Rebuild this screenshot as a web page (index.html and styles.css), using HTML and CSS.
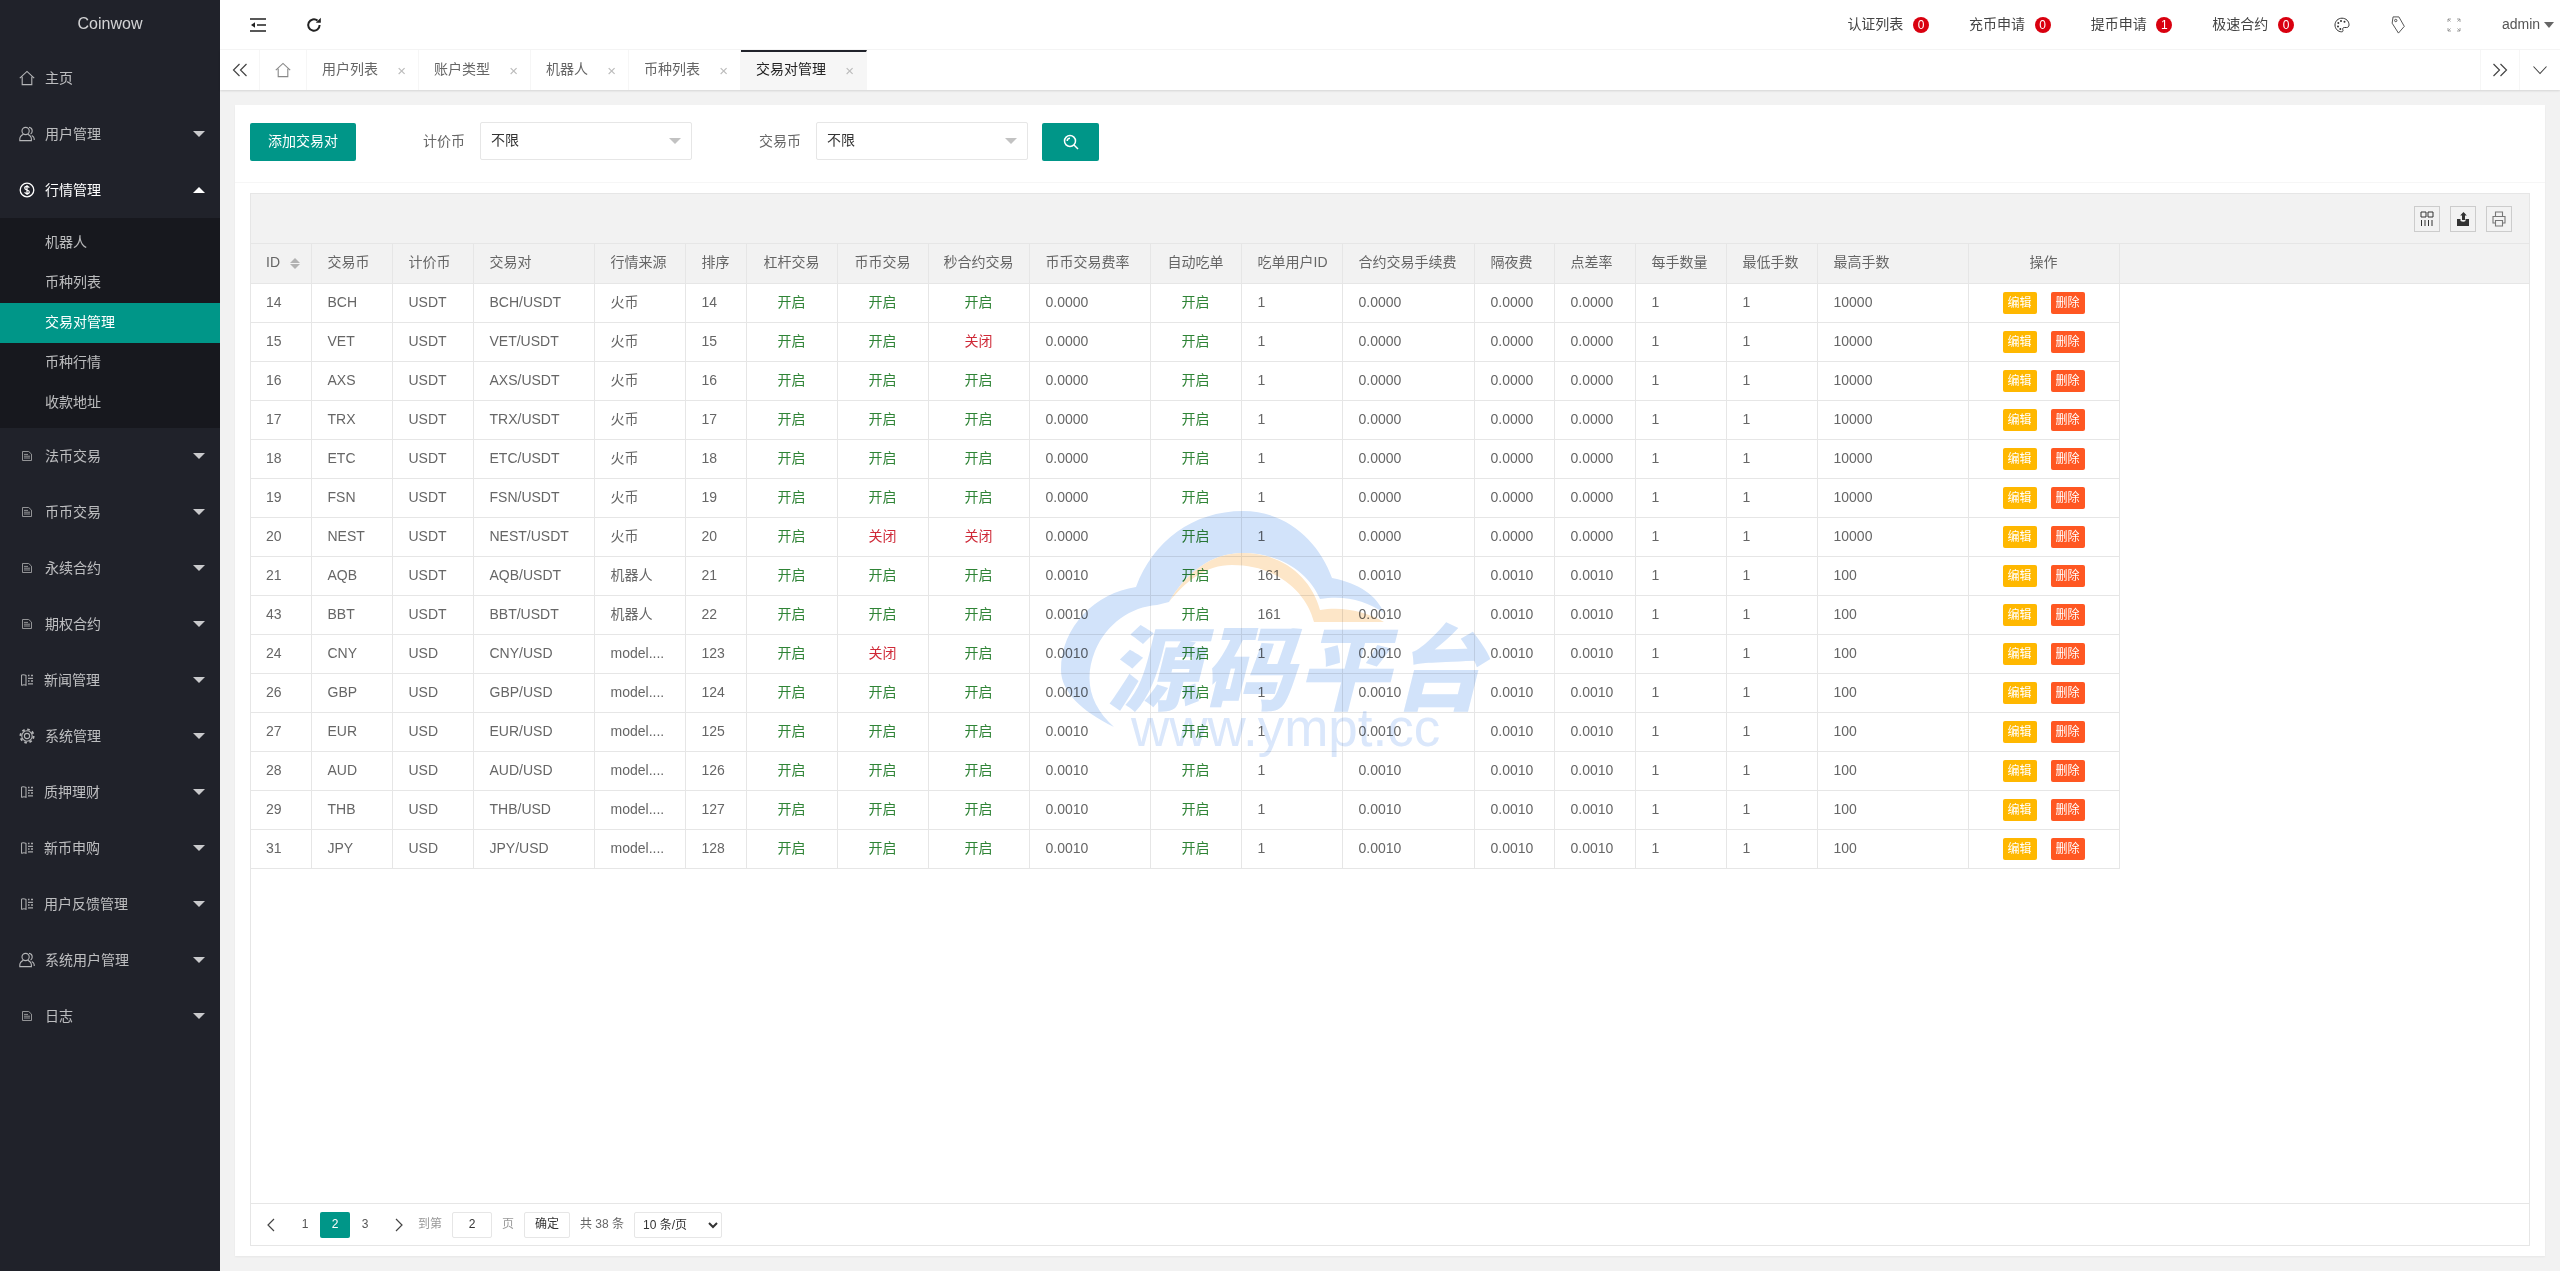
FILE: index.html
```html
<!DOCTYPE html>
<html lang="zh-CN">
<head>
<meta charset="utf-8">
<title>交易对管理</title>
<link rel="stylesheet" href="styles.css">
</head>
<body>
<svg class="defs" aria-hidden="true">
  <symbol id="i-home" viewBox="0 0 16 16"><path d="M.8 8.2 8 1.4l7.2 6.8M3.2 6.8v7.8h9.600V6.800" fill="none" stroke="currentColor" stroke-width="1.1"/></symbol>
  <symbol id="i-user" viewBox="0 0 16 16"><g fill="none" stroke="currentColor" stroke-width="1.1"><circle cx="6.6" cy="5" r="3.6"/><path d="M4.4 8.2C2.4 9.2.8 10.6.8 13v1.6h11.6V13c0-2.4-1.6-3.800-3.600-4.800M10 1.400c1.800.3 3.200 1.800 3.200 3.600 0 1.200-.6 2.400-1.600 3.100M12.800 9.400c1.400.7 2.400 1.800 2.400 3.400v1.200"/></g></symbol>
  <symbol id="i-dollar" viewBox="0 0 16 16"><circle cx="8" cy="8" r="6.800" fill="none" stroke="currentColor" stroke-width="1.300"/><path d="M10.300 5.600C9.800 4.700 9 4.400 8 4.400c-1.300 0-2.300.7-2.300 1.700 0 2.400 4.600 1.300 4.600 3.800 0 1.100-1 1.700-2.300 1.700-1 0-1.900-.4-2.400-1.300M8 3v10" fill="none" stroke="currentColor" stroke-width="1.200"/></symbol>
  <symbol id="i-file" viewBox="0 0 10 10"><path d="M.5.5h6.200l2.800 2.600v6.400H.5z" fill="none" stroke="currentColor" stroke-width=".9"/><path d="M2 3.400h4M2 5.200h6M2 7h6" stroke="currentColor" stroke-width=".9"/></symbol>
  <symbol id="i-news" viewBox="0 0 12 12"><g fill="none" stroke="currentColor"><path d="M.5 1v10.500M.5 1c1.800-.5 3.400-.3 4.500.5v9.800c-1.100-.6-2.700-.8-4.500 .2" stroke-width="1.100"/><path d="M7 1.500h1.500M10 1.500h2M7 4.300h5M7 7h1.500M10 7h2M7 9.800h5" stroke-width="1.300"/></g></symbol>
  <symbol id="i-gear" viewBox="0 0 16 16"><g fill="none" stroke="currentColor"><circle cx="8" cy="8" r="5.200" stroke-width="1.100"/><circle cx="8" cy="8" r="2.600" stroke-width="1.100"/><circle cx="8" cy="8" r="6.600" stroke-width="1.900" stroke-dasharray="2.600 2.584"/></g></symbol>
  <symbol id="i-search" viewBox="0 0 16 16"><g fill="none" stroke="currentColor" stroke-width="1.500"><circle cx="7" cy="7" r="5.500"/><path d="m11 11 4 4M4.200 7A2.800 2.800 0 0 1 7 4.200"/></g></symbol>
</svg>

<aside class="side">
  <div class="logo">Coinwow</div>
  <nav class="menu">
    <a class="mi"><svg class="ic"><use href="#i-home"/></svg><span>主页</span></a>
    <a class="mi"><svg class="ic"><use href="#i-user"/></svg><span>用户管理</span><i class="tri"></i></a>
    <a class="mi open"><svg class="ic"><use href="#i-dollar"/></svg><span>行情管理</span><i class="tri up"></i></a>
    <div class="sub">
      <a class="si">机器人</a>
      <a class="si">币种列表</a>
      <a class="si cur">交易对管理</a>
      <a class="si">币种行情</a>
      <a class="si">收款地址</a>
    </div>
    <a class="mi"><svg class="ic sm"><use href="#i-file"/></svg><span>法币交易</span><i class="tri"></i></a>
    <a class="mi"><svg class="ic sm"><use href="#i-file"/></svg><span>币币交易</span><i class="tri"></i></a>
    <a class="mi"><svg class="ic sm"><use href="#i-file"/></svg><span>永续合约</span><i class="tri"></i></a>
    <a class="mi"><svg class="ic sm"><use href="#i-file"/></svg><span>期权合约</span><i class="tri"></i></a>
    <a class="mi"><svg class="ic md"><use href="#i-news"/></svg><span>新闻管理</span><i class="tri"></i></a>
    <a class="mi"><svg class="ic"><use href="#i-gear"/></svg><span>系统管理</span><i class="tri"></i></a>
    <a class="mi"><svg class="ic md"><use href="#i-news"/></svg><span>质押理财</span><i class="tri"></i></a>
    <a class="mi"><svg class="ic md"><use href="#i-news"/></svg><span>新币申购</span><i class="tri"></i></a>
    <a class="mi"><svg class="ic md"><use href="#i-news"/></svg><span>用户反馈管理</span><i class="tri"></i></a>
    <a class="mi"><svg class="ic"><use href="#i-user"/></svg><span>系统用户管理</span><i class="tri"></i></a>
    <a class="mi"><svg class="ic sm"><use href="#i-file"/></svg><span>日志</span><i class="tri"></i></a>
  </nav>
</aside>

<div class="main">
  <header class="top">
    <div class="top-l">
      <svg class="tool-ic" viewBox="0 0 16 14"><path d="M0 1h16M7 7h9M0 13h16" stroke="#222" stroke-width="1.500" fill="none"/><path d="M5 4.200v5.600L1 7z" fill="#222"/></svg>
      <svg class="tool-ic ref" viewBox="0 0 16 16"><path d="M13.600 8A5.700 5.700 0 1 1 11.500 3.600" stroke="#222" stroke-width="2" fill="none"/><path d="M9.800 5.800h5V.8z" fill="#222"/></svg>
    </div>
    <div class="top-r">
      <a class="tn">认证列表<b class="badge">0</b></a>
      <a class="tn">充币申请<b class="badge">0</b></a>
      <a class="tn">提币申请<b class="badge">1</b></a>
      <a class="tn">极速合约<b class="badge">0</b></a>
      <a class="tn ico"><svg class="ic16" viewBox="0 0 16 16"><g fill="none" stroke="#333"><path d="M8 1.200C4 1.200 1 4.200 1 8s3 6.800 6.600 6.800c1.400 0 1.700-1 1.200-2-.5-1.200.2-2.300 1.600-2.300h2.200c1.600 0 2.400-1.100 2.400-2.700 0-3.700-3-6.600-7-6.600z"/></g><g fill="#333"><circle cx="4.300" cy="6" r="1"/><circle cx="7" cy="3.900" r="1"/><circle cx="10.500" cy="4.700" r="1"/><circle cx="4" cy="9.500" r="1"/><circle cx="6.300" cy="12" r="1"/></g></svg></a>
      <a class="tn ico"><svg class="ic16 tag" viewBox="0 0 16 20"><path d="M2.500 1h6.500l6 10.500-6.500 7.500L1.500 8z" fill="none" stroke="#444"/><circle cx="5.500" cy="5" r="1.300" fill="none" stroke="#444"/></svg></a>
      <a class="tn ico"><svg class="ic16" viewBox="0 0 16 16"><path d="M2 5V2h3M2 2l2.500 2.500M14 5V2h-3M14 2l-2.500 2.500M2 11v3h3M2 14l2.500-2.500M14 11v3h-3M14 14l-2.500-2.500" fill="none" stroke="#8a8a8a" stroke-width=".8"/></svg></a>
      <a class="admin">admin<i class="tri dark"></i></a>
    </div>
  </header>

  <div class="tabs">
    <a class="tb-btn"><svg class="chev" viewBox="0 0 16 14"><path d="M7.500 1 1.500 7l6 6M14.500 1l-6 6 6 6" fill="none" stroke="#444" stroke-width="1.200"/></svg></a>
    <a class="tb-home"><svg class="home-ic"><use href="#i-home"/></svg></a>
    <a class="tab">用户列表<em>×</em></a>
    <a class="tab">账户类型<em>×</em></a>
    <a class="tab">机器人<em>×</em></a>
    <a class="tab">币种列表<em>×</em></a>
    <a class="tab on-tab">交易对管理<em>×</em></a>
    <a class="tb-btn tb-next"><svg class="chev" viewBox="0 0 16 14"><path d="m1.500 1 6 6-6 6M8.500 1l6 6-6 6" fill="none" stroke="#444" stroke-width="1.200"/></svg></a>
    <a class="tb-btn last"><svg class="chev" viewBox="0 0 16 14"><path d="m1.500 3.500 6.500 7 6.500-7" fill="none" stroke="#444" stroke-width="1.100"/></svg></a>
  </div>

  <main class="content">
    <section class="card">
      <div class="filter">
        <button class="btn-add">添加交易对</button>
        <label class="flabel">计价币</label>
        <div class="sel">不限<i class="tri grey"></i></div>
        <label class="flabel">交易币</label>
        <div class="sel">不限<i class="tri grey"></i></div>
        <button class="btn-search"><svg class="s-ic"><use href="#i-search"/></svg></button>
      </div>
      <div class="tbox-wrap">
        <div class="tbox">
          <div class="tools">
            <a class="tool"><svg viewBox="0 0 14 16" class="t-svg"><path d="M1 1h5v5H1zM8 1h5v5H8zM1.500 9v6M5 9v6M8.500 9v6M12 9v6" fill="none" stroke="#333"/></svg></a>
            <a class="tool"><svg viewBox="0 0 14 16" class="t-svg"><path d="M1 8h3.500v2c2 1 4 1 5 0V8H13v7H1z" fill="#333"/><path d="M6 9V4.500H4.200L7.500 1l3.300 3.500H9V9z" fill="#333"/></svg></a>
            <a class="tool"><svg viewBox="0 0 14 16" class="t-svg"><path d="M3.500 5V1h7v4M3 12H1V5.500h12V12h-2M3.500 9.500h7V15h-7z" fill="none" stroke="#777" stroke-width="1.100"/></svg></a>
          </div>
          <div class="tmain">
            <table class="grid">
              <colgroup>
                <col class="w60"><col class="w81"><col class="w81"><col class="w121"><col class="w91"><col class="w61"><col class="w91"><col class="w91"><col class="w101"><col class="w121"><col class="w91"><col class="w101"><col class="w132"><col class="w80"><col class="w81"><col class="w91"><col class="w91"><col class="w151"><col class="w151"><col>
              </colgroup>
              <thead>
                <tr><th class="id-th">ID<i class="sort"></i></th><th>交易币</th><th>计价币</th><th>交易对</th><th>行情来源</th><th>排序</th><th class="c">杠杆交易</th><th class="c">币币交易</th><th class="c">秒合约交易</th><th>币币交易费率</th><th class="c">自动吃单</th><th>吃单用户ID</th><th>合约交易手续费</th><th>隔夜费</th><th>点差率</th><th>每手数量</th><th>最低手数</th><th>最高手数</th><th class="c">操作</th><th class="fill"></th></tr>
              </thead>
              <tbody>
                <tr><td>14</td><td>BCH</td><td>USDT</td><td>BCH/USDT</td><td>火币</td><td>14</td><td class="c on">开启</td><td class="c on">开启</td><td class="c on">开启</td><td>0.0000</td><td class="c on">开启</td><td>1</td><td>0.0000</td><td>0.0000</td><td>0.0000</td><td>1</td><td>1</td><td>10000</td><td class="c"><a class="b-edit">编辑</a><a class="b-del">删除</a></td><td class="fill"></td></tr>
                <tr><td>15</td><td>VET</td><td>USDT</td><td>VET/USDT</td><td>火币</td><td>15</td><td class="c on">开启</td><td class="c on">开启</td><td class="c off">关闭</td><td>0.0000</td><td class="c on">开启</td><td>1</td><td>0.0000</td><td>0.0000</td><td>0.0000</td><td>1</td><td>1</td><td>10000</td><td class="c"><a class="b-edit">编辑</a><a class="b-del">删除</a></td><td class="fill"></td></tr>
                <tr><td>16</td><td>AXS</td><td>USDT</td><td>AXS/USDT</td><td>火币</td><td>16</td><td class="c on">开启</td><td class="c on">开启</td><td class="c on">开启</td><td>0.0000</td><td class="c on">开启</td><td>1</td><td>0.0000</td><td>0.0000</td><td>0.0000</td><td>1</td><td>1</td><td>10000</td><td class="c"><a class="b-edit">编辑</a><a class="b-del">删除</a></td><td class="fill"></td></tr>
                <tr><td>17</td><td>TRX</td><td>USDT</td><td>TRX/USDT</td><td>火币</td><td>17</td><td class="c on">开启</td><td class="c on">开启</td><td class="c on">开启</td><td>0.0000</td><td class="c on">开启</td><td>1</td><td>0.0000</td><td>0.0000</td><td>0.0000</td><td>1</td><td>1</td><td>10000</td><td class="c"><a class="b-edit">编辑</a><a class="b-del">删除</a></td><td class="fill"></td></tr>
                <tr><td>18</td><td>ETC</td><td>USDT</td><td>ETC/USDT</td><td>火币</td><td>18</td><td class="c on">开启</td><td class="c on">开启</td><td class="c on">开启</td><td>0.0000</td><td class="c on">开启</td><td>1</td><td>0.0000</td><td>0.0000</td><td>0.0000</td><td>1</td><td>1</td><td>10000</td><td class="c"><a class="b-edit">编辑</a><a class="b-del">删除</a></td><td class="fill"></td></tr>
                <tr><td>19</td><td>FSN</td><td>USDT</td><td>FSN/USDT</td><td>火币</td><td>19</td><td class="c on">开启</td><td class="c on">开启</td><td class="c on">开启</td><td>0.0000</td><td class="c on">开启</td><td>1</td><td>0.0000</td><td>0.0000</td><td>0.0000</td><td>1</td><td>1</td><td>10000</td><td class="c"><a class="b-edit">编辑</a><a class="b-del">删除</a></td><td class="fill"></td></tr>
                <tr><td>20</td><td>NEST</td><td>USDT</td><td>NEST/USDT</td><td>火币</td><td>20</td><td class="c on">开启</td><td class="c off">关闭</td><td class="c off">关闭</td><td>0.0000</td><td class="c on">开启</td><td>1</td><td>0.0000</td><td>0.0000</td><td>0.0000</td><td>1</td><td>1</td><td>10000</td><td class="c"><a class="b-edit">编辑</a><a class="b-del">删除</a></td><td class="fill"></td></tr>
                <tr><td>21</td><td>AQB</td><td>USDT</td><td>AQB/USDT</td><td>机器人</td><td>21</td><td class="c on">开启</td><td class="c on">开启</td><td class="c on">开启</td><td>0.0010</td><td class="c on">开启</td><td>161</td><td>0.0010</td><td>0.0010</td><td>0.0010</td><td>1</td><td>1</td><td>100</td><td class="c"><a class="b-edit">编辑</a><a class="b-del">删除</a></td><td class="fill"></td></tr>
                <tr><td>43</td><td>BBT</td><td>USDT</td><td>BBT/USDT</td><td>机器人</td><td>22</td><td class="c on">开启</td><td class="c on">开启</td><td class="c on">开启</td><td>0.0010</td><td class="c on">开启</td><td>161</td><td>0.0010</td><td>0.0010</td><td>0.0010</td><td>1</td><td>1</td><td>100</td><td class="c"><a class="b-edit">编辑</a><a class="b-del">删除</a></td><td class="fill"></td></tr>
                <tr><td>24</td><td>CNY</td><td>USD</td><td>CNY/USD</td><td>model....</td><td>123</td><td class="c on">开启</td><td class="c off">关闭</td><td class="c on">开启</td><td>0.0010</td><td class="c on">开启</td><td>1</td><td>0.0010</td><td>0.0010</td><td>0.0010</td><td>1</td><td>1</td><td>100</td><td class="c"><a class="b-edit">编辑</a><a class="b-del">删除</a></td><td class="fill"></td></tr>
                <tr><td>26</td><td>GBP</td><td>USD</td><td>GBP/USD</td><td>model....</td><td>124</td><td class="c on">开启</td><td class="c on">开启</td><td class="c on">开启</td><td>0.0010</td><td class="c on">开启</td><td>1</td><td>0.0010</td><td>0.0010</td><td>0.0010</td><td>1</td><td>1</td><td>100</td><td class="c"><a class="b-edit">编辑</a><a class="b-del">删除</a></td><td class="fill"></td></tr>
                <tr><td>27</td><td>EUR</td><td>USD</td><td>EUR/USD</td><td>model....</td><td>125</td><td class="c on">开启</td><td class="c on">开启</td><td class="c on">开启</td><td>0.0010</td><td class="c on">开启</td><td>1</td><td>0.0010</td><td>0.0010</td><td>0.0010</td><td>1</td><td>1</td><td>100</td><td class="c"><a class="b-edit">编辑</a><a class="b-del">删除</a></td><td class="fill"></td></tr>
                <tr><td>28</td><td>AUD</td><td>USD</td><td>AUD/USD</td><td>model....</td><td>126</td><td class="c on">开启</td><td class="c on">开启</td><td class="c on">开启</td><td>0.0010</td><td class="c on">开启</td><td>1</td><td>0.0010</td><td>0.0010</td><td>0.0010</td><td>1</td><td>1</td><td>100</td><td class="c"><a class="b-edit">编辑</a><a class="b-del">删除</a></td><td class="fill"></td></tr>
                <tr><td>29</td><td>THB</td><td>USD</td><td>THB/USD</td><td>model....</td><td>127</td><td class="c on">开启</td><td class="c on">开启</td><td class="c on">开启</td><td>0.0010</td><td class="c on">开启</td><td>1</td><td>0.0010</td><td>0.0010</td><td>0.0010</td><td>1</td><td>1</td><td>100</td><td class="c"><a class="b-edit">编辑</a><a class="b-del">删除</a></td><td class="fill"></td></tr>
                <tr><td>31</td><td>JPY</td><td>USD</td><td>JPY/USD</td><td>model....</td><td>128</td><td class="c on">开启</td><td class="c on">开启</td><td class="c on">开启</td><td>0.0010</td><td class="c on">开启</td><td>1</td><td>0.0010</td><td>0.0010</td><td>0.0010</td><td>1</td><td>1</td><td>100</td><td class="c"><a class="b-edit">编辑</a><a class="b-del">删除</a></td><td class="fill"></td></tr>
              </tbody>
            </table>
          </div>
          <div class="pager">
            <a class="pg arrow prev"><svg class="pg-ic" viewBox="0 0 8 14"><path d="M7 1 1 7l6 6" fill="none" stroke="#444" stroke-width="1.200"/></svg></a>
            <a class="pg">1</a>
            <a class="pg cur-pg">2</a>
            <a class="pg">3</a>
            <a class="pg arrow next"><svg class="pg-ic" viewBox="0 0 8 14"><path d="m1 1 6 6-6 6" fill="none" stroke="#444" stroke-width="1.200"/></svg></a>
            <span class="skip">到第</span>
            <span class="pg-in">2</span>
            <span class="skip page-w">页</span>
            <a class="pg-ok">确定</a>
            <span class="count">共 38 条</span>
            <select class="limit"><option>10 条/页</option></select>
          </div>
        </div>
      </div>
    </section>
  </main>
</div>

<div class="wm" aria-hidden="true">
  <svg class="wm-cloud" viewBox="0 0 430 245">
    <path d="M53 216C20 200 0 180 0 159C0 115 35 82 75 76C92 30 132 0 182 0C225 0 258 30 271 67C298 72 316 85 323 102C305 90 285 84 259 88C248 62 220 42 182 42C150 42 125 62 108 91L96 94C70 96 46 112 34 140C22 170 30 195 53 216Z" fill="#d2e3fa"/>
    <path d="M108 91C125 62 150 42 182 42C220 42 250 65 259 99C280 95 305 100 323 111L253 111C245 80 215 54 171 54C145 54 125 70 108 91Z" fill="#fde6c8"/>
  </svg>
  <span class="wm-cn">源码平台</span>
  <span class="wm-en">www.ympt.cc</span>
</div>
</body>
</html>
```

FILE: styles.css
```css
* { box-sizing: border-box; }
html, body { height: 100%; }
body {
  margin: 0;
  display: flex;
  height: 1271px;
  overflow: hidden;
  font: 14px/1.4 "Liberation Sans", "Noto Sans CJK SC", sans-serif;
  color: #333;
  background: #f2f2f2;
}
a { color: inherit; text-decoration: none; }
i, em { font-style: normal; }
.defs { display: none; }

/* sidebar */
.side { width: 220px; flex: none; background: #20222a; color: rgba(255,255,255,.7); }
.logo { height: 50px; line-height: 48px; text-align: center; font-size: 16px; color: rgba(255,255,255,.8); }
.mi { display: flex; align-items: center; height: 56px; padding-left: 19px; }
.mi span { margin-top: 2px; }
.mi.open { color: #fff; }
.ic { width: 16px; height: 16px; margin-right: 10px; flex: none; color: #b5b6b8; }
.open .ic { color: #fff; }
.ic.sm { width: 10px; height: 10px; margin: 0 13px 0 3px; color: #a0a1a3; }
.ic.md { width: 12px; height: 12px; margin: 0 11px 0 2px; color: #a8a9ab; }
.tri { width: 0; height: 0; border: 6px solid transparent; border-top-color: #c9cacc; border-bottom-width: 0; margin-left: auto; margin-right: 15px; }
.tri.up { border-top-width: 0; border-bottom: 6px solid #fff; }
.tri.dark { border-width: 6px 5px 0; border-top-color: #666; margin: 0 0 0 4px; }
.tri.grey { border-top-color: #c2c2c2; margin-right: 10px; }
.sub { background: #17181e; padding: 5px 0; }
.si { display: flex; align-items: center; height: 40px; padding-left: 45px; }
.si.cur { background: #009688; color: #fff; }

/* main */
.main { flex: 1; min-width: 0; display: flex; flex-direction: column; }
.top { height: 50px; flex: none; display: flex; align-items: center; justify-content: space-between; background: #fff; border-bottom: 1px solid #f6f6f6; }
.top-l { display: flex; align-items: center; padding-left: 30px; }
.tool-ic { width: 16px; height: 14px; display: block; }
.tool-ic.ref { width: 16px; height: 16px; margin-left: 40px; }
.top-r { display: flex; align-items: center; }
.tn { display: flex; align-items: center; padding: 0 20px; color: #444; }
.badge { width: 16px; height: 16px; margin-left: 9.67px; border-radius: 50%; background: #d9000f; color: #fff; font-weight: 400; font-size: 12px; line-height: 16px; text-align: center; }
.ico { padding: 0 20px; }
.ic16 { width: 16px; height: 16px; display: block; }
.ic16.tag { height: 18px; }
.admin { display: flex; align-items: center; padding-left: 20px; width: 78px; color: #555; }

/* tabs */
.tabs { height: 40px; flex: none; display: flex; background: #fff; box-shadow: 0 1px 2px rgba(0,0,0,.12); position: relative; }
.tb-btn { width: 40px; display: flex; align-items: center; justify-content: center; border-right: 1px solid #f6f6f6; }
.tb-next { margin-left: auto; border-left: 1px solid #f6f6f6; }
.tb-btn.last { border-right: 0; }
.chev { width: 16px; height: 14px; }
.tb-home { width: 47px; display: flex; align-items: center; justify-content: center; border-right: 1px solid #f6f6f6; color: #888; }
.home-ic { width: 16px; height: 16px; }
.tab { display: flex; align-items: center; padding-left: 15px; border-right: 1px solid #f6f6f6; color: #666; }
.tab em { width: 40px; text-align: right; padding-right: 12px; color: #bbb; font-size: 15px; flex: none; }
.on-tab { background: #f6f6f6; color: #222; border-top: 2px solid #20222a; padding-bottom: 2px; }

/* card */
.content { flex: 1; min-height: 0; padding: 15px; display: flex; }
.card { flex: 1; min-width: 0; display: flex; flex-direction: column; background: #fff; box-shadow: 0 1px 2px rgba(0,0,0,.05); }
.filter { height: 78px; flex: none; display: flex; align-items: flex-start; padding: 17px 15px 0; border-bottom: 1px solid #f6f6f6; }
.btn-add { width: 106px; height: 38px; margin-top: 1px; border: 0; border-radius: 2px; background: #009688; color: #fff; font: inherit; padding: 0; }
.flabel { width: 42px; margin: 0 15px 0 67px; line-height: 38px; color: #666; white-space: nowrap; flex: none; }
.sel { width: 212px; height: 38px; flex: none; display: flex; align-items: center; padding-left: 10px; border: 1px solid #e6e6e6; border-radius: 2px; color: #333; background: #fff; }
.btn-search { width: 57px; height: 38px; margin-top: 1px; margin-left: 14px; border: 0; border-radius: 2px; background: #009688; color: #fff; display: flex; align-items: center; justify-content: center; padding: 0; }
.s-ic { width: 16px; height: 16px; }
.tbox-wrap { flex: 1; min-height: 0; display: flex; padding: 10px 15px; }
.tbox { flex: 1; min-width: 0; display: flex; flex-direction: column; border: 1px solid #e6e6e6; }
.tools { height: 50px; flex: none; display: flex; align-items: center; justify-content: flex-end; gap: 10px; padding-right: 17px; background: #f2f2f2; border-bottom: 1px solid #e6e6e6; }
.tool { width: 26px; height: 26px; display: flex; align-items: center; justify-content: center; border: 1px solid #ccc; }
.t-svg { width: 14px; height: 16px; }
.tmain { flex: 1; min-height: 0; }

/* table */
.grid { width: 100%; table-layout: fixed; border-collapse: collapse; color: #666; }
.grid th, .grid td { height: 39px; padding: 0 0 0 16px; text-align: left; font-weight: 400; white-space: nowrap; overflow: hidden; border: 1px solid #e6e6e6; border-top: 0; }
.grid th:first-child, .grid td:first-child { border-left: 0; padding-left: 15px; }
.grid th { background: #f2f2f2; }
.grid .id-th { overflow: visible; }
.grid .c { text-align: center; padding: 0; }
.grid .on { color: #2f8436; }
.grid .off { color: #cf2a38; }
.grid th.fill { border-right: 0; }
.grid td.fill { border: 0; }
.w60 { width: 60px; } .w61 { width: 61px; } .w80 { width: 80px; } .w81 { width: 81px; } .w91 { width: 91px; } .w101 { width: 101px; } .w121 { width: 121px; } .w132 { width: 132px; } .w151 { width: 151px; }
.sort { display: inline-block; position: relative; top: -3px; vertical-align: middle; width: 10px; height: 5px; margin-left: 10px; border-left: 5px solid transparent; border-right: 5px solid transparent; border-bottom: 5px solid #b2b2b2; }
.sort::after { content: ""; position: absolute; left: -5px; top: 6px; border-left: 5px solid transparent; border-right: 5px solid transparent; border-top: 5px solid #b2b2b2; }
.b-edit, .b-del { display: inline-block; width: 34px; height: 22px; line-height: 22px; border-radius: 2px; color: #fff; font-size: 12px; text-align: center; vertical-align: middle; }
.b-edit { background: #ffb800; }
.b-del { background: #ff5722; margin-left: 14px; }

/* pager */
.pager { height: 42px; flex: none; display: flex; align-items: center; padding-left: 5px; border-top: 1px solid #e6e6e6; font-size: 12px; color: #666; }
.pg { width: 30px; height: 26px; display: flex; align-items: center; justify-content: center; color: #555; }
.prev { margin-right: 4px; }
.next { margin-left: 4px; }
.pg-ic { width: 8px; height: 14px; }
.cur-pg { background: #009688; color: #fff; border-radius: 2px; }
.skip { color: #999; margin-left: 4px; }
.pg-in { width: 40px; height: 26px; display: flex; align-items: center; justify-content: center; margin-left: 10px; border: 1px solid #e6e6e6; border-radius: 2px; color: #333; }
.page-w { margin-left: 10px; }
.pg-ok { width: 46px; height: 26px; display: flex; align-items: center; justify-content: center; margin-left: 10px; border: 1px solid #e6e6e6; border-radius: 2px; color: #333; }
.count { margin-left: 10px; color: #666; white-space: nowrap; }
.limit { width: 88px; height: 26px; margin-left: 10px; border: 1px solid #e6e6e6; border-radius: 2px; background: #fff; color: #333; font: 12px "Liberation Sans", "Noto Sans CJK SC", sans-serif; padding-left: 4px; }

/* watermark */
.wm { position: absolute; left: 1061px; top: 511px; width: 430px; height: 245px; pointer-events: none; mix-blend-mode: multiply; }
.wm-cloud { position: absolute; inset: 0; width: 430px; height: 245px; }
.wm-cn { position: absolute; left: 46px; top: 106px; font: italic 900 92px/1 "Noto Sans CJK SC", sans-serif; letter-spacing: 3px; color: #d2e3fa; white-space: nowrap; }
.wm-en { position: absolute; left: 70px; top: 190px; font: 53px/1 "Liberation Sans", sans-serif; color: #dae7fb; white-space: nowrap; }
```
